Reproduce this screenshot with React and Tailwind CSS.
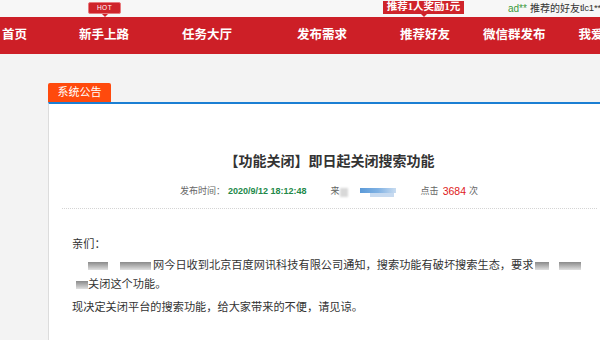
import React from "react";

const navItems = [
  { label: "首页", ml: "ml-[2px]" },
  { label: "新手上路", ml: "ml-[52px]" },
  { label: "任务大厅", ml: "ml-[53px]" },
  { label: "发布需求", ml: "ml-[65px]" },
  { label: "推荐好友", ml: "ml-[53px]" },
  { label: "微信群发布", ml: "ml-[33px]" },
  { label: "我爱", ml: "ml-[33px]" },
];

// pixelated blur used where names were masked in the screenshot
function Mosaic({ className }) {
  return (
    <span
      className={`inline-block align-middle h-[8px] bg-gradient-to-b from-[#8a8a8a] to-[#e0e0e0] blur-[0.6px] ${className}`}
    />
  );
}

export default function App() {
  return (
    <div className="w-[600px] h-[340px] overflow-hidden bg-[#f3f3f3] font-['Liberation_Sans','Noto_Sans_CJK_SC',sans-serif]">
      <div className="relative">
        <div className="h-[17px] bg-[#f7f7f7] flex items-center whitespace-nowrap text-[10px] text-[#333]">
          <span className="ml-[508px] text-[#3c9a3c]">ad**</span>
          <span className="ml-[3px]">推荐的好友</span>
          <span className="text-[9.5px] tracking-[-0.2px]">tlc1**</span>
        </div>
        <nav className="h-[37px] bg-[#cd1f27] flex items-center whitespace-nowrap text-white font-bold text-[12.5px]">
          {navItems.map((item) => (
            <span key={item.label} className={item.ml}>
              {item.label}
            </span>
          ))}
        </nav>

        {/* HOT badge */}
        <div className="absolute left-[88px] top-[2px] z-10">
          <div className="w-[33px] h-[12px] bg-[#cf232a] border border-[#e87a7e] rounded-[2px] flex items-center justify-center text-white text-[6.5px] tracking-[0.5px] leading-none">
            HOT
          </div>
          <div className="mx-auto w-0 h-0 border-l-[3px] border-r-[3px] border-t-[3px] border-l-transparent border-r-transparent border-t-[#cf232a]" />
        </div>

        {/* reward badge */}
        <div className="absolute left-[383px] top-[1px] z-10">
          <div className="w-[81px] h-[13px] bg-[#cf232a] flex items-center justify-center text-white font-bold text-[10.5px] leading-none font-['Liberation_Serif','Noto_Sans_CJK_SC',serif]">
            推荐1人奖励1元
          </div>
          <div className="mx-auto w-0 h-0 border-l-[3px] border-r-[3px] border-t-[3px] border-l-transparent border-r-transparent border-t-[#cf232a]" />
        </div>
      </div>

      <div className="pt-[29px] pl-[48px]">
        <div className="w-[63px] h-[19px] bg-[#ff4a0d] rounded-t-[2px] flex items-center justify-center text-white text-[11px]">
          系统公告
        </div>
        <div className="w-[562px] h-[240px] bg-white border-t-2 border-t-[#1b7fd3] border-l border-l-[#dcdcdc]">
          <h1 className="pt-[47px] text-center text-[14px] leading-[20px] font-bold text-[#333]">
            【功能关闭】即日起关闭搜索功能
          </h1>

          <div className="mt-[14px] pl-[131px] flex items-center h-[14px] whitespace-nowrap text-[9px] text-[#666]">
            <span>发布时间：</span>
            <span className="ml-[3px] text-[#23894a] font-bold">2020/9/12 18:12:48</span>
            <span className="ml-[24px]">来</span>
            <span className="inline-block w-[8px] h-[9px] bg-[#d8d8d8] blur-[0.8px]" />
            <span className="ml-[12px] inline-flex flex-col">
              <span className="w-[36px] h-[5px] bg-gradient-to-r from-[#5b9ad8] via-[#7fb1e3] to-[#c9dcf0] blur-[0.5px]" />
              <span className="ml-[10px] w-[24px] h-[4px] bg-[#c7daf0] blur-[0.6px]" />
            </span>
            <span className="ml-[25px]">点击</span>
            <span className="ml-[4px] text-[10.5px] text-[#e02020]">3684</span>
            <span className="ml-[3px]">次</span>
          </div>

          <div className="mt-[9px] mx-[13px] border-t border-dotted border-[#d4d4d4]" />

          <div className="pt-[26px] pl-[23px] text-[11.2px] leading-[19px] text-[#333] whitespace-nowrap">
            <p>亲们：</p>
            <p className="mt-[1.5px]">
              <Mosaic className="ml-[16px] w-[20px]" />
              <Mosaic className="ml-[12px] w-[31px]" />
              <span className="ml-[2px]">网今日收到北京百度网讯科技有限公司通知，搜索功能有破坏搜索生态，要求</span>
              <Mosaic className="ml-[2px] w-[14px]" />
              <Mosaic className="ml-[10px] w-[22px]" />
            </p>
            <p>
              <Mosaic className="ml-[4px] w-[12px]" />
              <span>关闭这个功能。</span>
            </p>
            <p className="mt-[4px]">现决定关闭平台的搜索功能，给大家带来的不便，请见谅。</p>
          </div>
        </div>
      </div>
    </div>
  );
}
